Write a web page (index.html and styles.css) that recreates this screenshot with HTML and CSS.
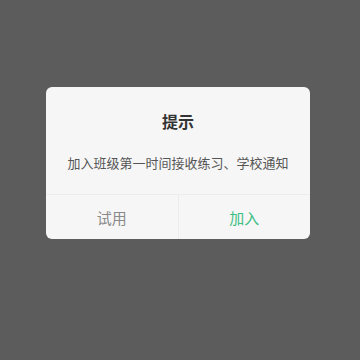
FILE: index.html
```html
<!DOCTYPE html>
<html lang="zh-CN">
<head>
    <meta charset="UTF-8">
    <meta name="viewport" content="width=device-width, initial-scale=1.0">
    <title>提示</title>
    <link rel="stylesheet" href="styles.css">
</head>
<body>
    <div class="mask">
        <div class="dialog">
            <div class="dialog-title">提示</div>
            <div class="dialog-msg">加入班级第一时间接收练习、学校通知</div>
            <div class="dialog-btns">
                <div class="btn btn-cancel">试用</div>
                <div class="btn btn-ok">加入</div>
            </div>
        </div>
    </div>
</body>
</html>
```
FILE: styles.css
```css
body {
    margin: 0;
    background: #5c5c5c;
    font-family: "Noto Sans CJK SC", "Noto Sans", sans-serif;
}

.mask {
    width: 360px;
    height: 360px;
    box-sizing: border-box;
    padding: 87px 0 0 46px;
}

.dialog {
    width: 264px;
    height: 152px;
    background: #f6f6f6;
    border-radius: 6px;
    display: flex;
    flex-direction: column;
    overflow: hidden;
}

.dialog-title {
    padding-top: 23px;
    text-align: center;
    font-size: 16px;
    line-height: 22px;
    font-weight: bold;
    color: #333;
}

.dialog-msg {
    margin-top: 22px;
    padding-bottom: 22px;
    text-align: center;
    font-size: 13px;
    line-height: 18px;
    color: #555;
    border-bottom: 1px solid #ececec;
}

.dialog-btns {
    flex: 1;
    display: flex;
}

.btn {
    flex: 1;
    display: flex;
    align-items: center;
    justify-content: center;
    font-size: 15px;
}

.btn-cancel {
    color: #8a8a8a;
    border-right: 1px solid #ececec;
}

.btn-ok {
    color: #3dbf84;
}
```
